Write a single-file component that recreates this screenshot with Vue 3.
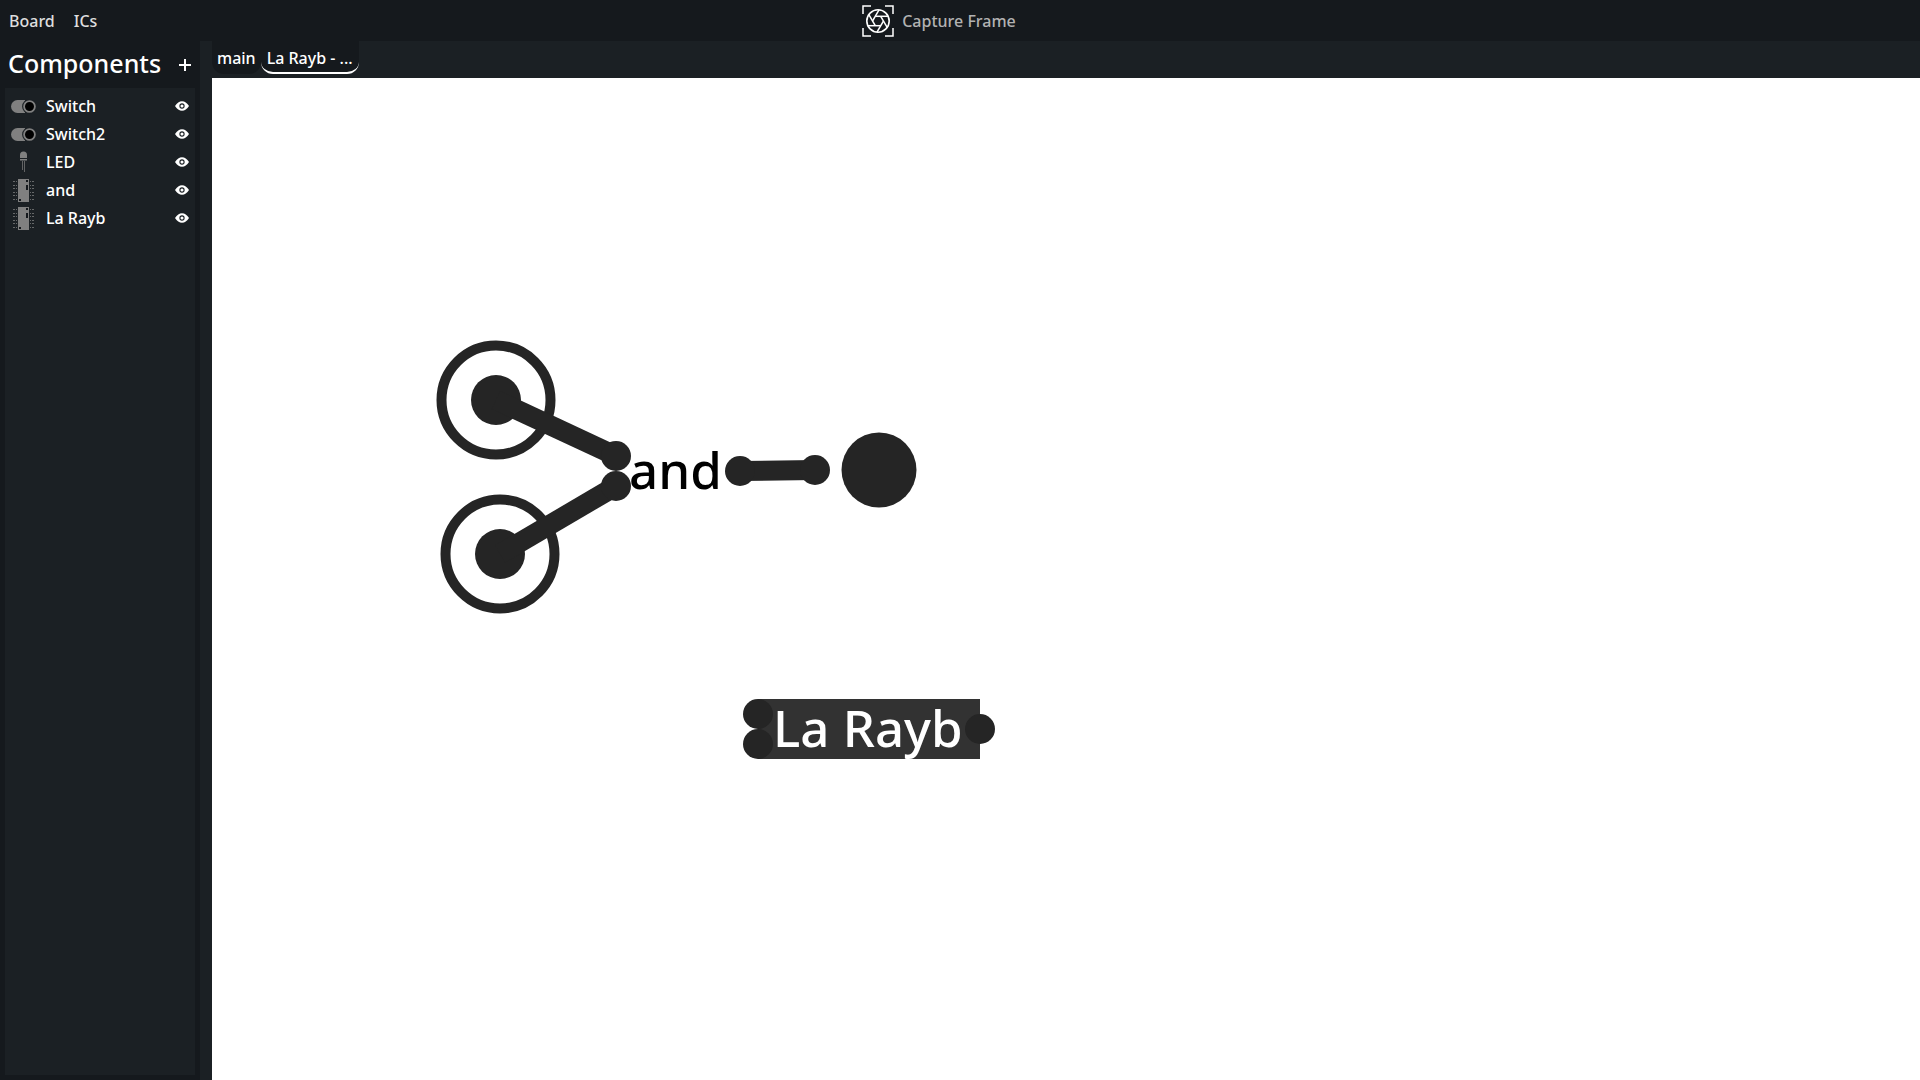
<script setup>
import { ref } from 'vue'

const components = [
  { name: 'Switch', icon: 'switch' },
  { name: 'Switch2', icon: 'switch' },
  { name: 'LED', icon: 'led' },
  { name: 'and', icon: 'chip' },
  { name: 'La Rayb', icon: 'chip' },
]
const tabs = ['main', 'La Rayb - ...']
const activeTab = ref('La Rayb - ...')

const switches = [
  { x: 496, y: 400 },
  { x: 500, y: 554 },
]
const wires = [
  { x1: 496, y1: 400, x2: 616, y2: 456 },
  { x1: 500, y1: 554, x2: 616, y2: 486 },
  { x1: 740, y1: 471, x2: 815, y2: 470 },
]
const pins = [
  { x: 616, y: 456 },
  { x: 616, y: 486 },
  { x: 740, y: 471 },
  { x: 815, y: 470 },
  { x: 758, y: 714 },
  { x: 758, y: 744 },
  { x: 980, y: 729 },
]
const chipPins = [4, 8, 11, 15, 18, 22]
const blades = [0, 60, 120, 180, 240, 300]
</script>

<template>
  <div class="app">
    <header class="topbar">
      <nav class="menus">
        <button type="button">Board</button>
        <button type="button">ICs</button>
      </nav>
      <button type="button" class="capture">
        <svg width="32" height="32" viewBox="0 0 32 32" fill="none" stroke="#fff" aria-hidden="true">
          <path d="M1 9V1H9M23 1H31V9M31 23V31H23M9 31H1V23" stroke-width="1.5" />
          <circle cx="16" cy="16" r="11.2" stroke-width="1.6" />
          <path
            v-for="angle in blades"
            :key="angle"
            d="M13.3 11.3H26.2"
            stroke-width="1.5"
            :transform="`rotate(${angle} 16 16)`"
          />
        </svg>
        <span>Capture Frame</span>
      </button>
    </header>

    <div class="body">
      <aside class="sidebar">
        <div class="heading">
          <h1>Components</h1>
          <button type="button" class="add" aria-label="Add component">
            <svg width="12" height="12" viewBox="0 0 12 12" stroke="#fff" stroke-width="2" aria-hidden="true">
              <path d="M6 0V12M0 6H12" />
            </svg>
          </button>
        </div>
        <ul class="list">
          <li v-for="item in components" :key="item.name">
            <svg class="kind" width="26" height="26" viewBox="0 0 26 26" aria-hidden="true">
              <g v-if="item.icon === 'switch'">
                <path d="M7.5 7H15V20H7.5A6.5 6.5 0 0 1 7.5 7Z" fill="#808080" />
                <circle cx="19.5" cy="13.5" r="7.4" fill="#1b2024" />
                <circle cx="19.5" cy="13.5" r="5.4" fill="#000" stroke="#808080" stroke-width="1.8" />
              </g>
              <g v-else-if="item.icon === 'led'" fill="#808080">
                <path d="M10 9V6A3.5 3.5 0 0 1 17 6V9ZM10 10H17V11.5H10Z" />
                <path d="M12 12H13V21H12ZM14 12H15V23H14Z" opacity="0.7" />
              </g>
              <g v-else fill="#808080">
                <rect x="8" y="2" width="11" height="23" />
                <g opacity="0.75">
                  <path v-for="y in chipPins" :key="y" :d="`M3 ${y}h2v1h-2ZM6 ${y}h1v1h-1ZM20 ${y}h1v1h-1ZM22 ${y}h2v1h-2Z`" />
                </g>
                <path d="M16 3H18V5H16ZM16 8H18V13H16ZM9 22H11V24H9Z" fill="#15191d" />
              </g>
            </svg>
            <span class="name">{{ item.name }}</span>
            <button type="button" class="eye" :aria-label="`Toggle ${item.name} visibility`">
              <svg width="14" height="10" viewBox="0 0 14 10" aria-hidden="true">
                <path d="M0 5Q3 0.2 7 0.2T14 5Q11 9.8 7 9.8T0 5Z" fill="#fff" />
                <circle cx="7" cy="5" r="2.1" fill="#fff" stroke="#1b2024" stroke-width="1.1" />
              </svg>
            </button>
          </li>
        </ul>
      </aside>
      <div class="grip"></div>
      <main class="workspace">
        <div class="tabs" role="tablist">
          <button
            v-for="tab in tabs"
            :key="tab"
            type="button"
            role="tab"
            :aria-selected="tab === activeTab"
            :class="{ active: tab === activeTab }"
            @click="activeTab = tab"
          >{{ tab }}</button>
        </div>
        <div class="board">
          <svg class="circuit" width="1000" height="720" viewBox="212 78 1000 720">
            <g v-for="s in switches" :key="s.y">
              <circle :cx="s.x" :cy="s.y" r="54.5" fill="none" stroke="#252525" stroke-width="10" />
              <circle :cx="s.x" :cy="s.y" r="25" fill="#252525" />
            </g>
            <rect x="758" y="699" width="222" height="60" fill="#323232" />
            <line
              v-for="w in wires"
              :key="w.x1"
              v-bind="w"
              stroke="#252525"
              stroke-width="20"
            />
            <circle v-for="(p, i) in pins" :key="i" :cx="p.x" :cy="p.y" r="15" fill="#252525" />
            <circle cx="879" cy="470" r="37.5" fill="#252525" />
            <text x="629" y="489" fill="#000">and</text>
            <text x="773" y="747" fill="#fff">La Rayb</text>
          </svg>
        </div>
      </main>
    </div>
  </div>
</template>

<style>
body {
  margin: 0;
  background: #15191d;
}
</style>

<style scoped>
.app {
  display: flex;
  flex-direction: column;
  min-height: 100vh;
  background: #15191d;
  color: #fff;
  font: 500 16px/22px "Noto Sans", sans-serif;
}
button {
  margin: 0;
  padding: 0;
  border: 0;
  background: none;
  color: inherit;
  font: inherit;
}
.topbar {
  display: grid;
  grid-template-columns: 1fr auto 1fr;
  align-items: center;
  height: 41px;
  padding-right: 42px;
}
.menus {
  display: flex;
  gap: 19px;
  padding-left: 9px;
  color: #dedede;
}
.capture {
  display: flex;
  align-items: center;
  gap: 8px;
  color: #b2b2b2;
}
.body {
  display: flex;
  flex: 1;
}
.sidebar {
  display: flex;
  flex-direction: column;
  box-sizing: border-box;
  width: 200px;
  padding: 0 5px 5px;
}
.heading {
  display: flex;
  align-items: center;
  justify-content: space-between;
  height: 47px;
  padding: 0 4px 0 3px;
}
h1 {
  margin: 0;
  padding-bottom: 4px;
  font-size: 25px;
  line-height: 34px;
  font-weight: 500;
}
.add {
  display: flex;
}
.list {
  flex: 1;
  margin: 0;
  padding: 4px 6px 0 5px;
  background: #1b2024;
  list-style: none;
}
.list li {
  display: flex;
  align-items: center;
  height: 28px;
}
.name {
  flex: 1;
  padding-left: 10px;
}
.eye {
  display: flex;
}
.grip {
  width: 12px;
  background: #1b2024;
}
.workspace {
  display: flex;
  flex-direction: column;
  flex: 1;
  min-width: 0;
}
.tabs {
  display: flex;
  height: 37px;
  background: #1b2024;
}
.tabs button {
  box-sizing: border-box;
  height: 33px;
  padding: 2px 5px;
  border-radius: 0 0 12px 12px;
  background: #15191d;
}
.tabs .active {
  padding: 2px 6px 0;
  border-bottom: 2px solid #fff;
}
.board {
  flex: 1;
  background: #fff;
  overflow: hidden;
}
.circuit {
  display: block;
}
.circuit text {
  font-size: 51px;
  font-weight: 500;
}
</style>
